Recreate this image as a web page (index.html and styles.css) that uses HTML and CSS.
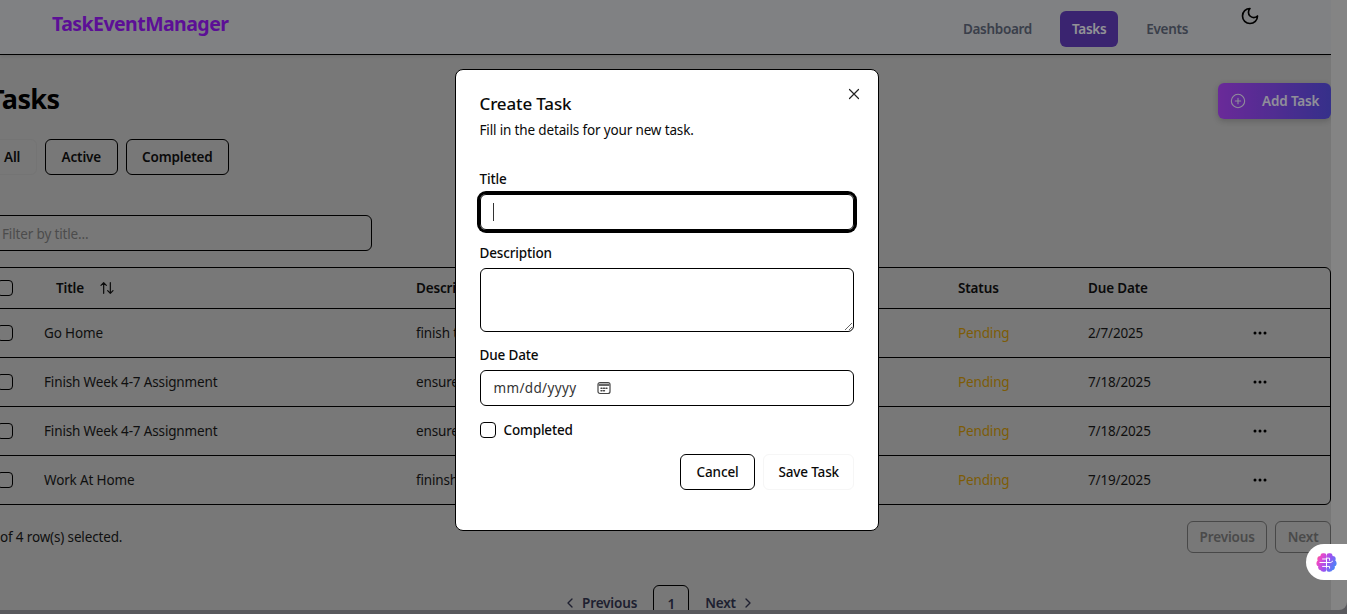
FILE: index.html
```html
<!DOCTYPE html>
<html lang="en">
<head>
    <meta charset="UTF-8">
    <title>TaskEventManager</title>
    <link rel="stylesheet" href="styles.css">
</head>
<body>
    <div class="window">
        <div class="page">
            <header class="topbar">
                <div class="logo">TaskEventManager</div>
                <nav class="nav">
                    <a class="nav-link">Dashboard</a>
                    <a class="nav-link nav-active">Tasks</a>
                    <a class="nav-link">Events</a>
                </nav>
                <svg class="moon" viewBox="0 0 24 24"><path d="M12 3a6 6 0 0 0 9 9 9 9 0 1 1-9-9Z"/></svg>
            </header>
            <main class="main">
                <div class="title-row">
                    <h1>Tasks</h1>
                    <button class="add-btn">
                        <svg viewBox="0 0 24 24"><circle cx="12" cy="12" r="10"/><path d="M8 12h8M12 8v8"/></svg>
                        <span>Add Task</span>
                    </button>
                </div>
                <div class="tabs">
                    <button class="tab tab-all">All</button>
                    <button class="tab">Active</button>
                    <button class="tab">Completed</button>
                </div>
                <input class="filter" type="text" placeholder="Filter by title...">
                <div class="table-wrap">
                    <table>
                        <colgroup>
                            <col class="c-check"><col class="c-title"><col class="c-desc"><col class="c-gap"><col class="c-status"><col class="c-date"><col>
                        </colgroup>
                        <thead>
                            <tr>
                                <th><input type="checkbox" class="check"></th>
                                <th><span class="sort">Title
                                    <svg viewBox="0 0 24 24"><path d="m21 16-4 4-4-4M17 20V4M3 8l4-4 4 4M7 4v16"/></svg>
                                </span></th>
                                <th>Description</th>
                                <th></th>
                                <th>Status</th>
                                <th>Due Date</th>
                                <th></th>
                            </tr>
                        </thead>
                        <tbody>
                            <tr>
                                <td><input type="checkbox" class="check"></td>
                                <td>Go Home</td><td>finish the task</td><td></td>
                                <td class="pending">Pending</td><td>2/7/2025</td>
                                <td><svg class="dots" viewBox="0 0 16 16"><circle cx="3" cy="8" r="1.5"/><circle cx="8" cy="8" r="1.5"/><circle cx="13" cy="8" r="1.5"/></svg></td>
                            </tr>
                            <tr>
                                <td><input type="checkbox" class="check"></td>
                                <td>Finish Week 4-7 Assignment</td><td>ensure all done</td><td></td>
                                <td class="pending">Pending</td><td>7/18/2025</td>
                                <td><svg class="dots" viewBox="0 0 16 16"><circle cx="3" cy="8" r="1.5"/><circle cx="8" cy="8" r="1.5"/><circle cx="13" cy="8" r="1.5"/></svg></td>
                            </tr>
                            <tr>
                                <td><input type="checkbox" class="check"></td>
                                <td>Finish Week 4-7 Assignment</td><td>ensure all done</td><td></td>
                                <td class="pending">Pending</td><td>7/18/2025</td>
                                <td><svg class="dots" viewBox="0 0 16 16"><circle cx="3" cy="8" r="1.5"/><circle cx="8" cy="8" r="1.5"/><circle cx="13" cy="8" r="1.5"/></svg></td>
                            </tr>
                            <tr>
                                <td><input type="checkbox" class="check"></td>
                                <td>Work At Home</td><td>fininsh the work</td><td></td>
                                <td class="pending">Pending</td><td>7/19/2025</td>
                                <td><svg class="dots" viewBox="0 0 16 16"><circle cx="3" cy="8" r="1.5"/><circle cx="8" cy="8" r="1.5"/><circle cx="13" cy="8" r="1.5"/></svg></td>
                            </tr>
                        </tbody>
                    </table>
                </div>
                <div class="table-foot">
                    <span>0 of 4 row(s) selected.</span>
                    <div class="foot-btns">
                        <button class="foot-btn">Previous</button>
                        <button class="foot-btn">Next</button>
                    </div>
                </div>
                <div class="pager">
                    <a class="pager-link"><svg viewBox="0 0 24 24"><path d="m15 18-6-6 6-6"/></svg>Previous</a>
                    <a class="pager-num">1</a>
                    <a class="pager-link">Next<svg viewBox="0 0 24 24"><path d="m9 18 6-6-6-6"/></svg></a>
                </div>
            </main>
        </div>
        <div class="scrollbar"></div>
    </div>

    <div class="overlay"></div>

    <div class="modal">
        <svg class="close" viewBox="0 0 24 24"><path d="M18 6 6 18M6 6l12 12"/></svg>
        <h2>Create Task</h2>
        <p class="modal-sub">Fill in the details for your new task.</p>
        <form class="form">
            <label>Title</label>
            <div class="field field-focus"><span class="caret"></span></div>
            <label>Description</label>
            <textarea class="area"></textarea>
            <label>Due Date</label>
            <div class="field date">
                <span>mm/dd/yyyy</span>
                <svg viewBox="0 0 16 16"><rect x="2" y="2.500" width="12" height="11" rx="2"/><path class="cal-band" d="M2.500 3.500h11v2.500h-11z"/><path class="cal-dots" d="M5 8.200h1M7.500 8.200h1M10 8.200h1M5 10.800h1M7.500 10.800h1"/></svg>
            </div>
            <div class="done-row">
                <input type="checkbox" class="check">
                <span>Completed</span>
            </div>
            <div class="actions">
                <button type="button" class="btn-cancel">Cancel</button>
                <button type="button" class="btn-save">Save Task</button>
            </div>
        </form>
    </div>

    <div class="brain-tab">
        <svg viewBox="0 0 24 24">
            <defs>
                <linearGradient id="brainGrad" gradientUnits="userSpaceOnUse" x1="0" y1="4" x2="24" y2="16">
                    <stop offset="0" stop-color="#f8706a"/>
                    <stop offset="0.2" stop-color="#ec48c8"/>
                    <stop offset="0.55" stop-color="#a050f0"/>
                    <stop offset="1" stop-color="#3c8cf8"/>
                </linearGradient>
            </defs>
            <g fill="url(#brainGrad)">
                <circle cx="8.500" cy="5" r="3.500"/><circle cx="5" cy="8" r="3.500"/><circle cx="4" cy="13" r="3.500"/><circle cx="6" cy="17.500" r="3.500"/><circle cx="9" cy="19.500" r="3"/>
                <rect x="6" y="2" width="5.400" height="20"/>
                <circle cx="15.500" cy="5" r="3.500"/><circle cx="19" cy="8" r="3.500"/><circle cx="20" cy="13" r="3.500"/><circle cx="18" cy="17.500" r="3.500"/><circle cx="15" cy="19.500" r="3"/>
                <rect x="12.600" y="2" width="5.400" height="20"/>
            </g>
            <path class="brain-lines" d="M11.400 8H7.500M11.400 12H4.500M11.400 16.500H7.500M12.600 7H15.500v2.500M12.600 12H17l2-1.500M12.600 16.500H15.500v2"/>
        </svg>
    </div>
</body>
</html>
```

FILE: styles.css
```css
* {
    box-sizing: border-box;
}
html, body {
    margin: 0;
    height: 100%;
    overflow: hidden;
}
body {
    background-color: #94949b;
    font-family: "Noto Sans", "Open Sans", Arial, sans-serif;
    font-size: 13.500px;
    letter-spacing: -0.15px;
    color: #1a1a1a;
}
button, input, textarea {
    font-family: inherit;
    letter-spacing: inherit;
}
.window {
    display: flex;
    height: 610px;
    overflow: hidden;
    border-bottom-right-radius: 8px;
}
.page {
    width: 1331px;
    flex-shrink: 0;
    background-color: #c8c8c8;
    overflow: hidden;
}
.scrollbar {
    flex: 1;
    background-color: #dcdcdc;
}

/* top bar */
.topbar {
    height: 55px;
    display: flex;
    align-items: flex-start;
    padding-left: 52px;
    border-bottom: 1px solid #000000;
    background-color: #d5d7da;
    box-shadow: 0 1px 3px rgba(0, 0, 0, 0.1);
}
.logo {
    margin-top: 10px;
    font-size: 19.500px;
    line-height: 28px;
    font-weight: 700;
    letter-spacing: -0.55px;
    color: #9919fa;
}
.nav {
    display: flex;
    gap: 16px;
    margin-left: auto;
    margin-top: 11px;
}
.nav-link {
    height: 36px;
    padding: 0 12px;
    line-height: 36px;
    font-weight: 600;
    letter-spacing: -0.3px;
    color: #61697c;
    border-radius: 6px;
}
.nav-active {
    background-color: #613cbb;
    color: #f4f4fa;
}
.moon {
    width: 20px;
    height: 20px;
    margin: 6px 71px 0 40px;
    fill: none;
    stroke: #000000;
    stroke-width: 2;
    stroke-linecap: round;
    stroke-linejoin: round;
}

/* main column starts off the left edge, the page is scrolled sideways */
.main {
    margin-left: -11px;
}
.title-row {
    display: flex;
    justify-content: space-between;
    align-items: flex-start;
    height: 36px;
    margin-top: 28px;
}
h1 {
    margin: 0;
    font-size: 27px;
    line-height: 32px;
    font-weight: 700;
    letter-spacing: -0.6px;
    color: #000000;
}
.add-btn {
    display: flex;
    align-items: center;
    width: 113px;
    height: 36px;
    padding: 0 0 0 12px;
    border: none;
    border-radius: 6px;
    background: linear-gradient(to right, #b146ff, #5a50e6);
    color: #f0eeff;
    font-size: 13.500px;
    font-weight: 600;
    box-shadow: 0 2px 6px rgba(0, 0, 0, 0.2);
}
.add-btn svg {
    width: 16px;
    height: 16px;
    margin-right: 16px;
    fill: none;
    stroke: #f0eeff;
    stroke-width: 1.600;
    stroke-linecap: round;
}
.tabs {
    display: flex;
    gap: 8px;
    margin-top: 20px;
}
.tab {
    height: 36px;
    padding: 0 15.500px;
    background: transparent;
    border: 1px solid #000000;
    border-radius: 6px;
    font-size: 13.500px;
    font-weight: 600;
    color: #111111;
}
.tab-all {
    width: 48px;
    border-color: #c2c2c2;
    padding: 0 0 0 14px;
    text-align: left;
}
.filter {
    display: block;
    width: 383px;
    height: 36px;
    margin-top: 40px;
    padding: 1px 12px 0;
    border: 1px solid #000000;
    border-radius: 6px;
    background: transparent;
    font-size: 13.500px;
}
.filter::placeholder {
    color: #7f7f7f;
}

/* task table */
.table-wrap {
    width: 1342px;
    margin-top: 16px;
    border: 1px solid #000000;
    border-radius: 6px;
    overflow: hidden;
}
table {
    width: 100%;
    table-layout: fixed;
    border-collapse: collapse;
}
.c-check { width: 46px; }
.c-title { width: 372px; }
.c-desc { width: 291px; }
.c-gap { width: 251px; }
.c-status { width: 130px; }
.c-date { width: 164px; }
th, td {
    padding: 0 8px;
    text-align: left;
    white-space: nowrap;
    overflow: hidden;
}
th {
    height: 40px;
    font-weight: 600;
    color: #111111;
}
td {
    height: 49px;
    border-top: 1px solid #000000;
}
th:first-child, td:first-child {
    padding-left: 7px;
    padding-right: 0;
}
.check {
    appearance: none;
    display: block;
    width: 16px;
    height: 16px;
    margin: 0;
    border: 1px solid #000000;
    border-radius: 4px;
    background: transparent;
}
.sort {
    display: inline-flex;
    align-items: center;
    padding-left: 12px;
    gap: 15px;
}
.sort svg {
    width: 16px;
    height: 16px;
    fill: none;
    stroke: #111111;
    stroke-width: 1.800;
    stroke-linecap: round;
    stroke-linejoin: round;
}
.pending {
    color: #d19a0a;
}
.dots {
    display: block;
    width: 16px;
    height: 16px;
    fill: #000000;
}
.table-foot {
    display: flex;
    justify-content: space-between;
    align-items: center;
    width: 1342px;
    margin-top: 16px;
}
.foot-btns {
    display: flex;
    gap: 8px;
}
.foot-btn {
    height: 32px;
    padding: 0 11.500px;
    background: transparent;
    border: 1px solid #787878;
    border-radius: 6px;
    font-size: 13.500px;
    font-weight: 600;
    color: #7c7c7c;
}
.pager {
    display: flex;
    justify-content: center;
    align-items: flex-start;
    gap: 4px;
    width: 1342px;
    margin-top: 32px;
    padding-right: 2px;
    font-weight: 600;
    color: #333650;
}
.pager-link {
    display: flex;
    align-items: center;
    gap: 4px;
    height: 36px;
    padding: 0 12px;
}
.pager-link svg {
    width: 16px;
    height: 16px;
    fill: none;
    stroke: #333650;
    stroke-width: 2;
    stroke-linecap: round;
    stroke-linejoin: round;
}
.pager-num {
    width: 36px;
    height: 36px;
    line-height: 36px;
    text-align: center;
    border: 1px solid #000000;
    border-radius: 6px;
}

/* dimmed backdrop and dialog */
.overlay {
    position: fixed;
    inset: 0;
    background-color: rgba(0, 0, 0, 0.4);
}
.modal {
    position: fixed;
    left: 455px;
    top: 69px;
    width: 424px;
    height: 462px;
    padding: 24px 24px 24px 23.500px;
    background-color: #ffffff;
    border: 1px solid #000000;
    border-radius: 8px;
    color: #0a0a0a;
}
.close {
    position: absolute;
    top: 15px;
    right: 15px;
    width: 18px;
    height: 18px;
    fill: none;
    stroke: #222222;
    stroke-width: 1.600;
    stroke-linecap: round;
}
h2 {
    margin: 0;
    font-size: 17px;
    line-height: 20px;
    font-weight: 500;
}
.modal-sub {
    margin: 6px 0 0;
    line-height: 20px;
}
.form {
    margin-top: 30px;
    width: 374.500px;
}
label {
    display: block;
    font-weight: 500;
    line-height: 18px;
    margin-bottom: 6px;
}
.field {
    display: flex;
    align-items: center;
    height: 36px;
    padding: 0 13px;
    border: 1px solid #000000;
    border-radius: 6px;
    margin-bottom: 14px;
}
.field-focus {
    box-shadow: 0 0 0 3px #000000;
    padding: 0 12px;
}
.caret {
    display: block;
    width: 1px;
    height: 18px;
    background-color: #333333;
}
.area {
    display: block;
    width: 100%;
    height: 64px;
    margin-bottom: 14px;
    border: 1px solid #000000;
    border-radius: 6px;
    outline: none;
}
.date {
    gap: 20px;
    margin-bottom: 16px;
    letter-spacing: 0.35px;
    color: #333333;
}
.date svg {
    width: 16px;
    height: 16px;
    fill: none;
    stroke: #444444;
    stroke-width: 1.200;
}
.cal-band {
    fill: #666666;
    stroke: none;
}
.cal-dots {
    stroke-linecap: round;
    stroke-width: 1.400;
}
.done-row {
    display: flex;
    align-items: center;
    gap: 8px;
    height: 16px;
    font-weight: 500;
}
.actions {
    display: flex;
    justify-content: flex-end;
    gap: 8px;
    margin-top: 16px;
}
.actions button {
    height: 36px;
    padding: 0 16px;
    background: #ffffff;
    border-radius: 6px;
    font-size: 13.500px;
    font-weight: 500;
    color: #0a0a0a;
}
.btn-cancel {
    border: 1px solid #000000;
}
.actions .btn-save {
    padding: 0 14px;
    border: 1px solid #f6f6f6;
}

/* floating helper tab at the window edge */
.brain-tab {
    position: fixed;
    right: 0;
    top: 544px;
    display: flex;
    align-items: center;
    width: 41px;
    height: 36px;
    padding-left: 10px;
    background-color: #ffffff;
    border-radius: 18px 0 0 18px;
}
.brain-tab svg {
    width: 21px;
    height: 21px;
}
.brain-lines {
    fill: none;
    stroke: #ffffff;
    stroke-width: 1.100;
    stroke-linecap: round;
    stroke-linejoin: round;
}
```
